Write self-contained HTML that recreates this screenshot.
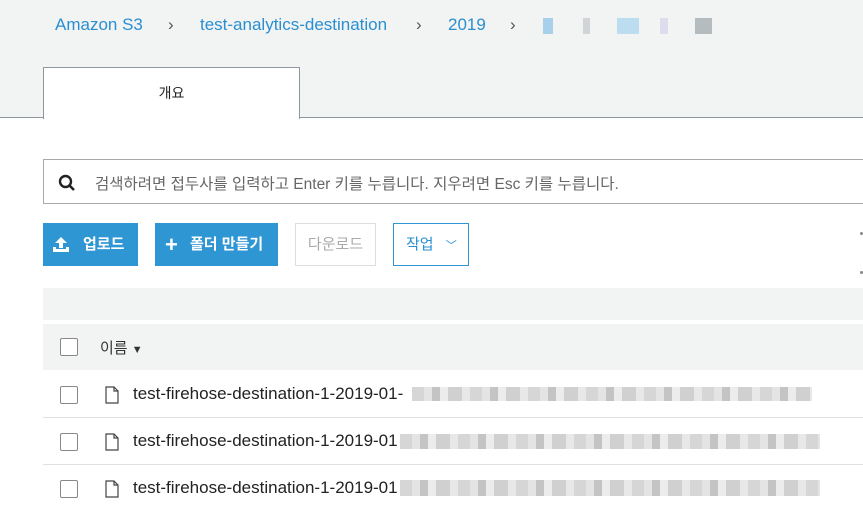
<!DOCTYPE html>
<html><head><meta charset="utf-8"><style>
*{margin:0;padding:0;box-sizing:border-box}
body{width:863px;height:517px;overflow:hidden;background:#fff;font-family:"Liberation Sans","Noto Sans CJK KR",sans-serif;position:relative;color:#333}
.top{position:absolute;left:0;top:0;width:863px;height:118px;background:#f2f3f3;border-bottom:1px solid #8c979f}
.bc{position:absolute;top:15px;font-size:17px;color:#2a8fd0}
.sep{position:absolute;top:15px;font-size:17px;color:#555}
.tab{position:absolute;left:43px;top:67px;width:257px;height:52px;background:#fff;border:1px solid #8c979f;border-bottom:none;text-align:center;line-height:50px;font-size:14px;color:#222}
.search{position:absolute;left:43px;top:159px;width:830px;height:45px;border:1px solid #aaa;background:#fff}
.search span{position:absolute;left:51px;top:12px;font-size:15.5px;color:#666}
.btn{position:absolute;top:223px;height:43px;font-size:15px;font-weight:bold;line-height:43px;color:#fff;background:#2f96d4}
.b{position:absolute;top:223px;height:43px;font-size:15px;line-height:41px;background:#fff;text-align:center}
.band{position:absolute;left:43px;width:820px;background:#f2f3f3}
.cb{position:absolute;left:60px;width:18px;height:18px;border:1px solid #888;border-radius:2px;background:#fff}
.row{position:absolute;left:43px;width:820px;height:47px;border-bottom:1px solid #e0e0e0}
.fn{position:absolute;left:133px;font-size:17px;color:#222;top:0}
.blur{position:absolute;height:14px;background:repeating-linear-gradient(90deg,#d6d6d6 0 12px,#e4e4e4 12px 20px,#c4c4c4 20px 28px,#ececec 28px 36px,#d0d0d0 36px 50px,#e8e8e8 50px 58px)}
.px{position:absolute;top:18px;width:10px;height:16px}
</style></head><body>
<div class="top"></div>
<div class="bc" style="left:55px">Amazon S3</div>
<div class="sep" style="left:168px">›</div>
<div class="bc" style="left:200px">test-analytics-destination</div>
<div class="sep" style="left:513px;left:416px">›</div>
<div class="bc" style="left:448px">2019</div>
<div class="sep" style="left:510px">›</div>
<div class="px" style="left:543px;background:#a8d0ea"></div>
<div class="px" style="left:583px;width:7px;background:#d0d4d6"></div>
<div class="px" style="left:617px;width:22px;background:#bcdcef"></div>
<div class="px" style="left:660px;width:8px;background:#dde"></div>
<div class="px" style="left:695px;width:17px;background:#b5bcc0"></div>
<div class="tab">개요</div>
<div class="search">
<svg style="position:absolute;left:14px;top:14px" width="18" height="18" viewBox="0 0 18 18"><circle cx="7.5" cy="7.5" r="5.5" fill="none" stroke="#222" stroke-width="2.4"/><path d="M11.5 11.5L16 16" stroke="#222" stroke-width="2.6"/></svg>
<span>검색하려면 접두사를 입력하고 Enter 키를 누릅니다. 지우려면 Esc 키를 누릅니다.</span></div>
<div class="btn" style="left:43px;width:95px"><svg style="position:absolute;left:10px;top:14px" width="16" height="15" viewBox="0 0 16 15"><path d="M8 0L2 6h4v5h4V6h4z M0 10h3v2h10v-2h3v5H0z" fill="#fff"/></svg><span style="position:absolute;left:40px">업로드</span></div>
<div class="btn" style="left:155px;width:123px"><span style="position:absolute;left:10px;font-size:22px">+</span><span style="position:absolute;left:35px">폴더 만들기</span></div>
<div class="b" style="left:295px;width:81px;border:1px solid #ddd;color:#aaa">다운로드</div>
<div class="b" style="left:393px;width:76px;border:1px solid #2f96d4;color:#2a8fd0;text-align:left;padding-left:12px">작업 <span style="margin-left:8px;font-size:11px">﹀</span></div>
<div style="position:absolute;left:860px;top:232px;width:3px;height:3px;background:#888;border-radius:2px"></div>
<div style="position:absolute;left:860px;top:271px;width:3px;height:3px;background:#888;border-radius:2px"></div>
<div class="band" style="top:288px;height:32px"></div>
<div class="band" style="top:324px;height:46px"></div>
<div class="cb" style="top:338px"></div>
<div style="position:absolute;left:100px;top:337px;font-size:15px">이름 <span style="font-size:11px">▼</span></div>
<div class="row" style="top:371px"></div>
<div class="row" style="top:418px"></div>
<div class="cb" style="top:386px"></div><div class="cb" style="top:433px"></div><div class="cb" style="top:480px"></div>
<svg style="position:absolute;left:105px;top:386px" width="14" height="18" viewBox="0 0 14 18"><path d="M1 1h8l4 4v12H1z M9 1v4h4" fill="none" stroke="#444" stroke-width="1.2"/></svg>
<svg style="position:absolute;left:105px;top:433px" width="14" height="18" viewBox="0 0 14 18"><path d="M1 1h8l4 4v12H1z M9 1v4h4" fill="none" stroke="#444" stroke-width="1.2"/></svg>
<svg style="position:absolute;left:105px;top:480px" width="14" height="18" viewBox="0 0 14 18"><path d="M1 1h8l4 4v12H1z M9 1v4h4" fill="none" stroke="#444" stroke-width="1.2"/></svg>
<div class="fn" style="top:384px">test-firehose-destination-1-2019-01-</div>
<div class="fn" style="top:431px">test-firehose-destination-1-2019-01</div>
<div class="fn" style="top:478px">test-firehose-destination-1-2019-01</div>
<div class="blur" style="left:412px;top:387px;width:400px"></div>
<div class="blur" style="left:400px;top:434px;width:420px;height:15px"></div>
<div class="blur" style="left:400px;top:480px;width:420px;height:16px"></div>
</body></html>
